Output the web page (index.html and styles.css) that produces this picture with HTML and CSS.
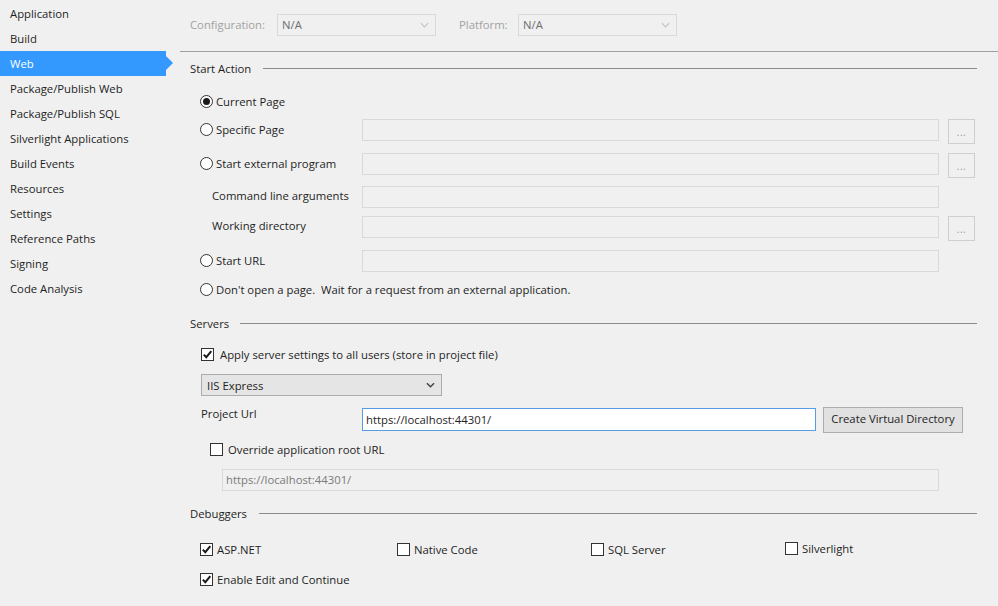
FILE: index.html
```html
<!DOCTYPE html>
<html>
<head>
<meta charset="utf-8">
<link rel="stylesheet" href="styles.css">
</head>
<body>
<div class="page">
  <nav class="sidebar">
    <div class="nav-item">Application</div>
    <div class="nav-item">Build</div>
    <div class="nav-item active">Web</div>
    <div class="nav-item">Package/Publish Web</div>
    <div class="nav-item">Package/Publish SQL</div>
    <div class="nav-item">Silverlight Applications</div>
    <div class="nav-item">Build Events</div>
    <div class="nav-item">Resources</div>
    <div class="nav-item">Settings</div>
    <div class="nav-item">Reference Paths</div>
    <div class="nav-item">Signing</div>
    <div class="nav-item">Code Analysis</div>
  </nav>
  <main class="main">
    <div class="topbar">
      <span class="dim-label">Configuration:</span>
      <div class="select disabled cfg"><span>N/A</span><svg class="chev" viewBox="0 0 10 6"><path d="M1 1 L5 5 L9 1" fill="none" stroke="currentColor" stroke-width="1.3"/></svg></div>
      <span class="dim-label plat">Platform:</span>
      <div class="select disabled cfg"><span>N/A</span><svg class="chev" viewBox="0 0 10 6"><path d="M1 1 L5 5 L9 1" fill="none" stroke="currentColor" stroke-width="1.3"/></svg></div>
    </div>
    <div class="rule"></div>

    <div class="heading h-start"><span>Start Action</span><div class="line"></div></div>

    <div class="row r-current">
      <label class="opt"><span class="radio checked"></span>Current Page</label>
    </div>
    <div class="row r-specific">
      <label class="opt"><span class="radio"></span>Specific Page</label>
      <div class="textbox"></div>
      <div class="dots">...</div>
    </div>
    <div class="row r-external">
      <label class="opt"><span class="radio"></span>Start external program</label>
      <div class="textbox"></div>
      <div class="dots">...</div>
    </div>
    <div class="row r-cmd">
      <span class="sub">Command line arguments</span>
      <div class="textbox"></div>
    </div>
    <div class="row r-wd">
      <span class="sub">Working directory</span>
      <div class="textbox"></div>
      <div class="dots">...</div>
    </div>
    <div class="row r-url">
      <label class="opt"><span class="radio"></span>Start URL</label>
      <div class="textbox"></div>
    </div>
    <div class="row r-dont">
      <label class="opt"><span class="radio"></span>Don't open a page.&nbsp; Wait for a request from an external application.</label>
    </div>

    <div class="heading h-servers"><span>Servers</span><div class="line"></div></div>

    <div class="row r-apply">
      <label class="chk-opt"><span class="check checked"><svg viewBox="0 0 11 11"><path d="M1.8 5.6 L4.3 8.2 L9.3 2.2" fill="none" stroke="#1a1a1a" stroke-width="2"/></svg></span>Apply server settings to all users (store in project file)</label>
    </div>
    <div class="select iis"><span>IIS Express</span><svg class="chev" viewBox="0 0 10 6"><path d="M1 1 L5 5 L9 1" fill="none" stroke="currentColor" stroke-width="1.6"/></svg></div>
    <div class="row r-proj">
      <span class="proj-label">Project Url</span>
      <div class="textbox active-input">https://localhost:44301/</div>
      <div class="button">Create Virtual Directory</div>
    </div>
    <div class="row r-override">
      <label class="chk-opt"><span class="check"></span>Override application root URL</label>
    </div>
    <div class="textbox root-url">https://localhost:44301/</div>

    <div class="heading h-debug"><span>Debuggers</span><div class="line"></div></div>

    <div class="debuggers">
      <label class="chk-opt"><span class="check checked"><svg viewBox="0 0 11 11"><path d="M1.8 5.6 L4.3 8.2 L9.3 2.2" fill="none" stroke="#1a1a1a" stroke-width="2"/></svg></span>ASP.NET</label>
      <label class="chk-opt"><span class="check"></span>Native Code</label>
      <label class="chk-opt"><span class="check"></span>SQL Server</label>
      <label class="chk-opt sl"><span class="check"></span>Silverlight</label>
    </div>
    <div class="row r-edit">
      <label class="chk-opt"><span class="check checked"><svg viewBox="0 0 11 11"><path d="M1.8 5.6 L4.3 8.2 L9.3 2.2" fill="none" stroke="#1a1a1a" stroke-width="2"/></svg></span>Enable Edit and Continue</label>
    </div>
  </main>
</div>
</body>
</html>
```

FILE: styles.css
```css
* { box-sizing: border-box; }
html, body {
  margin: 0;
  padding: 0;
  background: #f0f0f0;
}
body {
  font-family: "Open Sans", "Noto Sans", sans-serif;
  font-size: 11.3px;
  color: #1e1e1e;
  width: 998px;
  height: 606px;
  overflow: hidden;
}
.page {
  display: flex;
  height: 606px;
}
.sidebar {
  width: 180px;
  flex: none;
  padding-top: 1px;
}
.nav-item {
  height: 25px;
  line-height: 24px;
  padding: 1px 0 0 10px;
  width: 166px;
  position: relative;
  white-space: nowrap;
}
.nav-item.active {
  background: #3399ff;
  color: #fff;
}
.nav-item.active::after {
  content: "";
  position: absolute;
  right: -7px;
  top: 5px;
  border-left: 7px solid #3399ff;
  border-top: 7px solid transparent;
  border-bottom: 7px solid transparent;
}
.main {
  flex: 1;
  display: flex;
  flex-direction: column;
  min-width: 0;
}
.topbar {
  display: flex;
  align-items: center;
  height: 51px;
  padding: 0 0 2px 10px;
}
.dim-label {
  color: #a2a2a2;
  width: 87px;
}
.dim-label.plat {
  width: 59px;
  margin-left: 23px;
}
.select {
  display: flex;
  align-items: center;
  justify-content: space-between;
  height: 22px;
  padding: 0 6px 0 4px;
  border: 1px solid #d9d9d9;
}
.select .chev {
  width: 9px;
  height: 6px;
}
.select.disabled {
  color: #6d6d6d;
  width: 159px;
}
.select.disabled .chev {
  color: #c4c4c4;
}
.rule {
  height: 1px;
  background: #a0a0a0;
}
.heading {
  display: flex;
  align-items: center;
  height: 16px;
  padding-left: 10px;
  margin-right: 21px;
}
.heading .line {
  flex: 1;
  height: 1px;
  background: #8c8c8c;
  margin-left: 12px;
}
.h-start { margin-top: 8px; }
.h-servers { margin-top: 15px; }
.h-debug { margin-top: 14px; }
.h-servers .line { margin-left: 11px; }
.h-debug .line { margin-left: 12px; }

.row {
  display: flex;
  align-items: center;
  height: 22px;
  padding-left: 20px;
}
.opt, .chk-opt {
  display: flex;
  align-items: center;
  white-space: nowrap;
}
.row .opt, .row .sub {
  width: 162px;
  flex: none;
}
.r-dont .opt { width: auto; }
.sub { padding-left: 12px; margin-top: -3px; }
.radio {
  width: 13px;
  height: 13px;
  border: 1px solid #333;
  border-radius: 50%;
  background: #fff;
  margin-right: 3px;
  display: flex;
  align-items: center;
  justify-content: center;
}
.radio.checked::after {
  content: "";
  width: 7px;
  height: 7px;
  border-radius: 50%;
  background: #1a1a1a;
}
.check {
  width: 13px;
  height: 13px;
  border: 1px solid #333;
  background: #fff;
  margin-right: 6px;
  display: flex;
  align-items: center;
  justify-content: center;
  flex: none;
}
.check svg { width: 11px; height: 11px; }
.textbox {
  width: 577px;
  height: 22px;
  border: 1px solid #d9d9d9;
  flex: none;
}
.dots {
  width: 27px;
  height: 25px;
  margin-left: 9px;
  margin-top: 3px;
  border: 1px solid #cfcfcf;
  color: #9a9a9a;
  display: flex;
  align-items: center;
  justify-content: center;
  font-size: 10px;
  letter-spacing: 0.5px;
  flex: none;
}
.r-current { margin-top: 14px; }
.r-specific { margin-top: 7px; }
.r-external { margin-top: 12px; }
.r-cmd { margin-top: 11px; }
.r-wd { margin-top: 8px; }
.r-url { margin-top: 12px; }
.r-dont { margin-top: 6px; }
.r-specific .opt, .r-external .opt, .r-url .opt { margin-top: -2px; }

.r-apply { margin-top: 12px; padding-left: 21px; }
.select.iis {
  margin-top: 9px;
  margin-left: 21px;
  width: 241px;
  border-color: #acacac;
  background: #e5e5e5;
  color: #1e1e1e;
  padding-left: 5px;
}
.select.iis .chev { color: #444; }
.r-proj {
  margin-top: 11px;
  height: 26px;
  align-items: flex-start;
  padding-left: 21px;
}
.proj-label { width: 161px; flex: none; margin-top: -1px; }
.textbox.active-input {
  width: 454px;
  height: 23px;
  margin-top: 1px;
  background: #fff;
  border-color: #569de5;
  padding-left: 3px;
  line-height: 21px;
}
.button {
  margin-left: 7px;
  width: 140px;
  height: 26px;
  border: 1px solid #adadad;
  background: #e1e1e1;
  display: flex;
  align-items: center;
  justify-content: center;
  padding-bottom: 3px;
}
.r-override { margin-top: 6px; padding-left: 30px; }
.r-override .check { margin-right: 5px; }
.r-override .chk-opt { margin-top: -2px; }
.textbox.root-url {
  margin-top: 8px;
  margin-left: 42px;
  width: 717px;
  color: #7a7a7a;
  padding-left: 3px;
  line-height: 20px;
}
.debuggers {
  margin-top: 17px;
  height: 22px;
  padding-left: 20px;
  display: grid;
  grid-template-columns: 197px 194px 194px 1fr;
  align-items: center;
}
.debuggers .check { margin-right: 4px; }
.debuggers .sl { margin-top: -2px; }
.r-edit { margin-top: 9px; }
.r-edit .check { margin-right: 4px; }
.r-edit .chk-opt { margin-top: -2px; }
```
